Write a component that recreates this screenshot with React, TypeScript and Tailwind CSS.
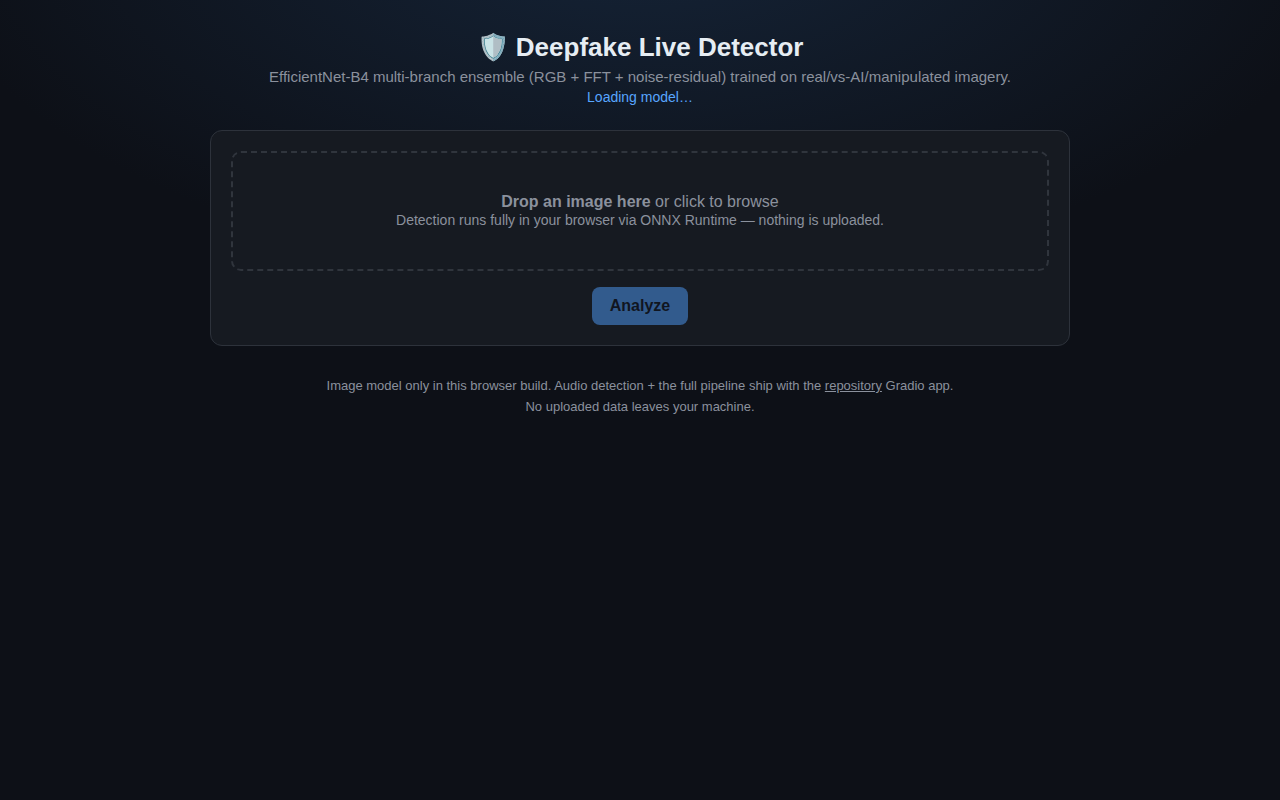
export default function App() {
  return (
    <div className="min-h-screen bg-[#0d1017] bg-[radial-gradient(1200px_600px_at_50%_-10%,#152438_0%,transparent_60%)] bg-no-repeat px-4 font-['Liberation_Sans',Arial,sans-serif] text-[#e6edf3]">
      <main className="mx-auto max-w-[860px] pt-8">
        <header className="mb-6 text-center">
          <h1 className="text-[26px] leading-[30px] font-bold">🛡️ Deepfake Live Detector</h1>
          <p className="mt-1 text-[15px] leading-[22px] text-[#8b919d]">
            EfficientNet-B4 multi-branch ensemble (RGB + FFT + noise-residual) trained on real/vs-AI/manipulated imagery.
          </p>
          <p className="text-[14px] leading-[18px] text-[#58a6ff]">Loading model…</p>
        </header>
        <section className="rounded-xl border border-[#2d323b] bg-[#161a21] p-5 text-center">
          <label className="block cursor-pointer rounded-[10px] border-2 border-dashed border-[#30353d] px-5 py-10 text-[#8b919d]">
            <span className="block text-[16px] leading-[18px]">
              <strong>Drop an image here</strong> or click to browse
            </span>
            <span className="block text-[14px] leading-[18px]">
              Detection runs fully in your browser via ONNX Runtime — nothing is uploaded.
            </span>
            <input type="file" accept="image/*" className="sr-only" />
          </label>
          <button type="button" disabled className="mt-4 rounded-lg bg-[#4f9cf9] px-[18px] py-[10px] text-[16px] leading-[18px] font-semibold text-[#0b1220] opacity-50">
            Analyze
          </button>
        </section>
        <footer className="mt-7 pt-px text-center text-[13px] leading-[21px] text-[#8b919d]">
          <p>
            Image model only in this browser build. Audio detection + the full pipeline ship with the{" "}
            <a href="#repository" className="underline">repository</a> Gradio app.
          </p>
          <p>No uploaded data leaves your machine.</p>
        </footer>
      </main>
    </div>
  );
}
